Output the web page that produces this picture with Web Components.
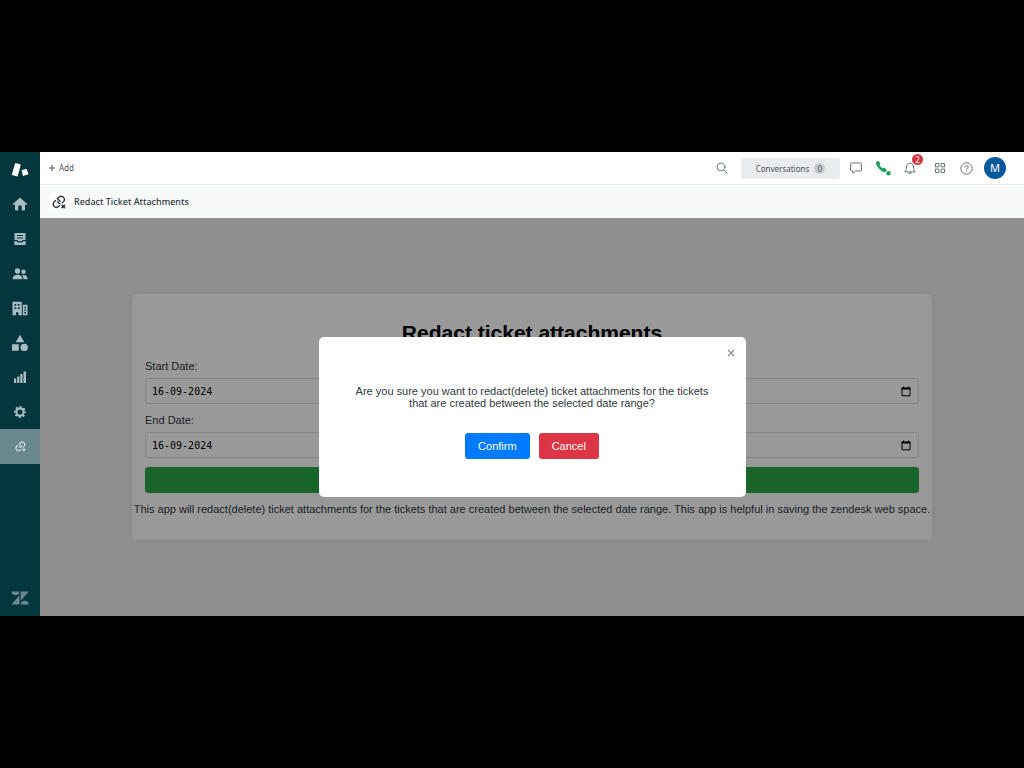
<!DOCTYPE html>
<html lang="en">
<head>
<meta charset="utf-8">
<meta name="viewport" content="width=device-width, initial-scale=1">
<title>Redact Ticket Attachments</title>
<style>
  body { margin: 0; background: #000; }
</style>
</head>
<body>
<desk-app></desk-app>
<script>
const define = (name, html, setup) => {
  const tpl = document.createElement('template');
  tpl.innerHTML = html;
  customElements.define(name, class extends HTMLElement {
    constructor() {
      super();
      this.attachShadow({ mode: 'open' }).append(tpl.content.cloneNode(true));
    }
    connectedCallback() { if (setup) setup(this, this.shadowRoot); }
  });
};

const linkIcon = `
  <g fill="none" stroke="currentColor" stroke-width="1.600" stroke-linecap="round">
    <path d="M6.200 4.200l1.600-1.600a3.600 3.600 0 0 1 5.200 5.200l-1.200 1.200"/>
    <path d="M6.500 7.800a3.300 3.300 0 0 0 2.600 2"/>
    <path d="M9.300 7.200a3.300 3.300 0 0 0-2.500-1.700"/>
    <path d="M4 6.400l-1.600 1.600a3.600 3.600 0 0 0 5.200 5.200l.8-.8"/>
  </g>
  <path d="M11 11.300l3.800 3.800m0-3.800l-3.800 3.800" stroke="currentColor" stroke-width="1.900"/>`;

define('side-item', `
<style>
  :host { display: flex; flex: 1; color: #a9bcc1; }
  :host([active]) { background: #69878c; color: #d9e2e4; }
  a { flex: 1; display: flex; align-items: center; justify-content: center; color: inherit; }
</style>
<a href="#"><slot></slot></a>`, (el, root) => {
  root.querySelector('a').setAttribute('aria-label', el.getAttribute('label'));
});

define('side-nav', `
<style>
  :host { display: flex; flex-direction: column; width: 40px; flex: none; background: #03363d; }
  .logo { height: 35px; display: flex; align-items: center; justify-content: center; }
  nav { height: 277px; display: flex; flex-direction: column; }
  .brand { margin-top: auto; height: 36px; display: flex; align-items: center; justify-content: center; }
  svg { display: block; }
</style>
<div class="logo"><svg width="18" height="16" viewBox="0 0 18 16" fill="#fff"><path d="M4.200 1l5.600 1.500-3.100 12-6-1.400zM10.500 8.300l5-1.600 2 5.500-5.500 1.900z"/></svg></div>
<nav aria-label="Main">
  <side-item label="Home"><svg width="16" height="14" viewBox="0 0 16 14" fill="currentColor"><path d="M8 .5L.8 6.900c-.3.300-.1.800.3.800H3v5.100c0 .4.200.6.600.6h2.700V9.200c0-.5.300-.8.800-.8h1.800c.5 0 .8.300.8.800v4.200h2.700c.4 0 .6-.2.600-.6V7.700h1.900c.4 0 .6-.5.300-.8z"/></svg></side-item>
  <side-item label="Views"><svg width="14" height="14" viewBox="0 0 14 14" fill="currentColor"><path fill-rule="evenodd" d="M2.300 1h9.400c.5 0 .8.300.8.800V8H9.800L8.600 9.300H5.400L4.200 8H1.500V1.800c0-.5.300-.8.800-.8zM4 3v1h6V3zm0 2.500v1h6v-1z"/><path d="M1.200 9.200h2.400l1.300 1.300h4.200l1.300-1.300h2.400v2.900c0 .5-.3.800-.8.800H2c-.5 0-.8-.3-.8-.8z"/></svg></side-item>
  <side-item label="Customers"><svg width="16" height="14" viewBox="0 0 16 14" fill="currentColor"><circle cx="5.500" cy="4" r="2.700"/><circle cx="11.500" cy="4.700" r="2.200"/><path d="M.5 12.300c0-3 2-4.600 5-4.600s5 1.600 5 4.600zM11.500 12.300h4.200c0-3-1.500-4.400-4.200-4.400-.6 0-1.100.1-1.600.3 1.100 1 1.600 2.300 1.600 4.100z"/></svg></side-item>
  <side-item label="Organizations"><svg width="16" height="15" viewBox="0 0 16 15" fill="currentColor"><path fill-rule="evenodd" d="M.5.800h9.300v13.400H6.500v-2.900H4v2.900H.5zM2.500 3v1.800h1.800V3zm3.400 0v1.800h1.800V3zM2.500 6.300v1.800h1.800V6.300zm3.400 0v1.800h1.800V6.300z"/><path fill-rule="evenodd" d="M10.800 3.800h4.700v10.400h-4.700zm1.500 2v1.400H14V5.800zm0 2.600v1.400H14V8.400zm0 2.600v1.400H14V11z"/></svg></side-item>
  <side-item label="Objects"><svg width="18" height="18" viewBox="0 0 18 18" fill="currentColor"><path d="M9 .8l4.300 7.400H4.700zM1 10.300h6.800v6.400H1z"/><circle cx="13.200" cy="13.400" r="3.700"/></svg></side-item>
  <side-item label="Reporting"><svg width="14" height="14" viewBox="0 0 14 14" fill="currentColor"><path d="M1 8.500h2.200V13H1zM4.200 6.500h2.200V13H4.200zM7.300 4h2.300v9H7.300zM10.500 1.500h2.500V13h-2.500z"/></svg></side-item>
  <side-item label="Admin"><svg width="14" height="14" viewBox="0 0 14 14"><circle cx="7" cy="7" r="3.700" fill="none" stroke="currentColor" stroke-width="2.200"/><circle cx="7" cy="7" r="5.200" fill="none" stroke="currentColor" stroke-width="1.700" stroke-dasharray="2.040 2.040" stroke-dashoffset="1"/></svg></side-item>
  <side-item label="Redact Ticket Attachments" active><svg width="11" height="11" viewBox="0 0 16 16">${linkIcon}</svg></side-item>
</nav>
<div class="brand"><svg width="18" height="14" viewBox="0 0 18 14" fill="#6d868b"><path d="M.5.500h8a4 3.800 0 0 1-8 0zM8.500 4v9.500h-8zM9.700.500h8L9.700 10zM9.700 13.500a4 3.800 0 0 1 8 0z"/></svg></div>`);

define('tool-button', `
<style>
  :host { display: block; width: 26px; color: #68737d; }
  :host([wide]) { width: 27px; }
  button { position: relative; width: 100%; height: 26px; padding: 0; border: 0; background: none; color: inherit;
    display: flex; align-items: center; justify-content: center; }
  ::slotted(span) { position: absolute; top: -1px; right: 0; width: 11px; height: 11px; border-radius: 50%;
    background: #d93340; color: #fff; font: 8px/11px "Noto Sans", sans-serif; text-align: center; }
</style>
<button type="button"><slot></slot></button>`, (el, root) => {
  root.querySelector('button').setAttribute('aria-label', el.getAttribute('label'));
});

define('top-bar', `
<style>
  :host { display: flex; align-items: center; height: 32px; padding: 0 18px 0 8px; background: #fff;
    border-bottom: 1px solid #e9ebed; font: 9px/12px "Noto Sans", sans-serif; color: #49545c; }
  button { font: inherit; color: inherit; border: 0; }
  .add { display: flex; align-items: center; gap: 3px; padding: 0; background: none; font-size: 8px; }
  .tools { margin-left: auto; display: flex; align-items: center; }
  .conv { width: 99px; height: 21px; margin: 0 2px 0 6px; padding: 0; border-radius: 3px; background: #e9ebed;
    display: flex; align-items: center; justify-content: center; gap: 5px; font-size: 8px; line-height: 11px; color: #49545c; }
  .count { width: 11px; height: 11px; border-radius: 50%; background: #c6cdd2; line-height: 11px; color: #49545c; }
  .group { display: flex; margin-right: 4px; }
  .avatar { width: 22px; height: 22px; margin-left: 5px; padding: 0; border-radius: 50%; background: #04599c;
    color: #fff; font-size: 11px; line-height: 22px; text-align: center; }
</style>
<button class="add" type="button"><svg width="8" height="8" viewBox="0 0 8 8" stroke="#49545c"><path d="M4 1v6M1 4h6"/></svg>Add</button>
<div class="tools">
  <tool-button label="Search"><svg width="12" height="12" viewBox="0 0 12 12" fill="none" stroke="currentColor" stroke-linecap="round"><circle cx="5" cy="5" r="3.900"/><path d="M8 8l3.300 3.300"/></svg></tool-button>
  <button class="conv" type="button">Conversations<span class="count">0</span></button>
  <div class="group">
    <tool-button wide label="Chat"><svg width="12" height="12" viewBox="0 0 12 12" fill="none" stroke="currentColor" stroke-linejoin="round"><path d="M1.300 1h9.400c.4 0 .7.300.7.700v6.600c0 .4-.3.700-.7.700H5.500l-2.700 2.300V9H1.300c-.4 0-.7-.3-.7-.7V1.700c0-.4.300-.7.700-.7z"/></svg></tool-button>
    <tool-button wide label="Talk"><svg width="16" height="16" viewBox="0 0 16 16" fill="#17a35e"><path d="M1.200 2.200l1.500-1.300c.3-.2.600-.2.800.1l1.700 2.300c.2.300.2.600 0 .8l-.8.900c.8 1.500 1.900 2.600 3.300 3.500l1-.7c.3-.2.600-.2.800 0l2 1.900c.3.300.3.600.1.900l-1.300 1.300c-.4.400-.9.500-1.400.3C5 10.500 2.300 7.600 1 3.500c-.2-.5-.1-1 .2-1.300z"/><circle cx="13.500" cy="13.300" r="2.200"/></svg></tool-button>
    <tool-button wide label="Notifications"><svg width="12" height="13" viewBox="0 0 12 13" fill="none" stroke="currentColor" stroke-linejoin="round"><path d="M6 1.200c-2.300 0-3.500 1.700-3.500 3.800 0 2.700-.6 3.500-1.700 4.900h10.400C10.100 8.500 9.500 7.700 9.500 5c0-2.100-1.200-3.800-3.500-3.800zM4.700 10.200a1.300 1.300 0 0 0 2.600 0"/></svg><span>2</span></tool-button>
  </div>
  <tool-button label="Products"><svg width="10" height="12" viewBox="0 0 10 12" fill="none" stroke="currentColor"><path d="M.5 1.500h3.400v3.400H.5zM6.100 1.500h3.400v3.400H6.100zM.5 7.100h3.400v3.400H.5zM6.100 7.100h3.400v3.400H6.100z"/></svg></tool-button>
  <tool-button label="Help"><svg width="13" height="13" viewBox="0 0 13 13" fill="none" stroke="currentColor"><circle cx="6.500" cy="6.500" r="5.700"/><path d="M4.800 5.200c0-1 .7-1.600 1.700-1.600s1.700.6 1.700 1.500c0 1.100-1.700 1.300-1.700 2.600"/><path d="M6.500 8.500v1.100"/></svg></tool-button>
  <button class="avatar" type="button" aria-label="Profile">M</button>
</div>`);

define('app-title', `
<style>
  :host { display: flex; align-items: center; gap: 7px; height: 33px; padding: 0 10px; background: #f8f9f9; color: #2f3941; }
  .icon { width: 17px; height: 17px; background: #fff; border-radius: 3px; display: flex; align-items: center; justify-content: center; }
  h2 { margin: 0; font: 500 9px/14px "Noto Sans", sans-serif; }
</style>
<div class="icon"><svg width="14" height="14" viewBox="0 0 16 16">${linkIcon}</svg></div>
<h2><slot></slot></h2>`);

define('date-field', `
<style>
  :host { display: block; margin-bottom: 9px; }
  label { display: block; margin-bottom: 5px; line-height: 14px; }
  .box { display: flex; align-items: center; box-sizing: border-box; height: 26px; padding: 0 7px 0 6px;
    border: 1px solid #dddddd; border-radius: 3px; }
  input { flex: 1; min-width: 0; padding: 0; border: 0; outline: 0; background: none; color: #000; font: 10px/13px "DejaVu Sans Mono", monospace; }
  button { display: flex; padding: 0; border: 0; background: none; }
</style>
<label for="date"></label>
<div class="box"><input id="date" type="text" value="16-09-2024">
<button type="button" aria-label="Open calendar"><svg width="10" height="11" viewBox="0 0 10 11"><path d="M1 2.500h8v7.300H1z" fill="none" stroke="#000"/><path d="M.5 1.500h9V3.500h-9zM2 .5h1.200v1H2zM6.800.500H8v1H6.800z"/></svg></button></div>`, (el, root) => {
  root.querySelector('label').textContent = el.getAttribute('label');
});

define('redact-form', `
<style>
  :host { display: block; box-sizing: border-box; width: 100%; max-width: 800px; padding: 13px; background: #fff; border-radius: 5px;
    box-shadow: 0 0 7px rgba(0, 0, 0, .1); font: 11px/13px "Liberation Sans", sans-serif; color: #2f3941; }
  h1 { margin: 14px 0; font-size: 21px; line-height: 24px; text-align: center; color: #000; }
  .submit { display: block; width: 100%; height: 26px; padding: 0; border: 0; border-radius: 3px; background: #28a745; }
  p { margin: 10px -12px 11px; text-align: center; }
</style>
<h1>Redact ticket attachments</h1>
<date-field label="Start Date:"></date-field>
<date-field label="End Date:"></date-field>
<button class="submit" type="button" aria-label="Redact"></button>
<p>This app will redact(delete) ticket attachments for the tickets that are created between the selected date range. This app is helpful in saving the zendesk web space.</p>`);

define('confirm-dialog', `
<style>
  :host { position: absolute; inset: 0; display: flex; align-items: center; justify-content: center; background: rgba(0, 0, 0, .4); }
  section { position: relative; box-sizing: border-box; width: 427px; max-width: 100%; padding: 48px 34px 38px; border-radius: 5px;
    background: #fff; font: 11px/12px "Liberation Sans", sans-serif; color: #2f3941; text-align: center; }
  p { margin: 0 0 24px; }
  .close { position: absolute; top: 8px; right: 7px; width: 16px; height: 16px; padding: 0; border: 0; background: none;
    display: flex; align-items: center; justify-content: center; }
  .actions { display: flex; justify-content: center; gap: 9px; }
  .actions button { height: 26px; padding: 0 13px; border: 0; border-radius: 3px; background: #007bff; color: #fff;
    font: 11px/13px "Liberation Sans", sans-serif; }
  .actions .cancel { background: #dc3545; }
</style>
<section role="dialog" aria-label="Confirm redaction">
  <button class="close" type="button" aria-label="Close"><svg width="8" height="8" viewBox="0 0 8 8" stroke="#87929d" stroke-width="1.300"><path d="M1 1l6 6M7 1L1 7"/></svg></button>
  <p><slot></slot></p>
  <div class="actions"><button type="button">Confirm</button><button class="cancel" type="button">Cancel</button></div>
</section>`);

define('desk-app', `
<style>
  :host { display: flex; align-items: center; min-height: 100vh; background: #000; }
  .shell { flex: 1; display: flex; min-width: 0; }
  .main { flex: 1; min-width: 0; display: flex; flex-direction: column; }
  .work { position: relative; display: flex; align-items: center; justify-content: center; padding: 76px 20px; background: #f0f0f0; }
</style>
<div class="shell">
  <side-nav></side-nav>
  <div class="main">
    <top-bar></top-bar>
    <app-title>Redact Ticket Attachments</app-title>
    <div class="work">
      <redact-form></redact-form>
      <confirm-dialog>Are you sure you want to redact(delete) ticket attachments for the tickets that are created between the selected date range?</confirm-dialog>
    </div>
  </div>
</div>`);
</script>
</body>
</html>
